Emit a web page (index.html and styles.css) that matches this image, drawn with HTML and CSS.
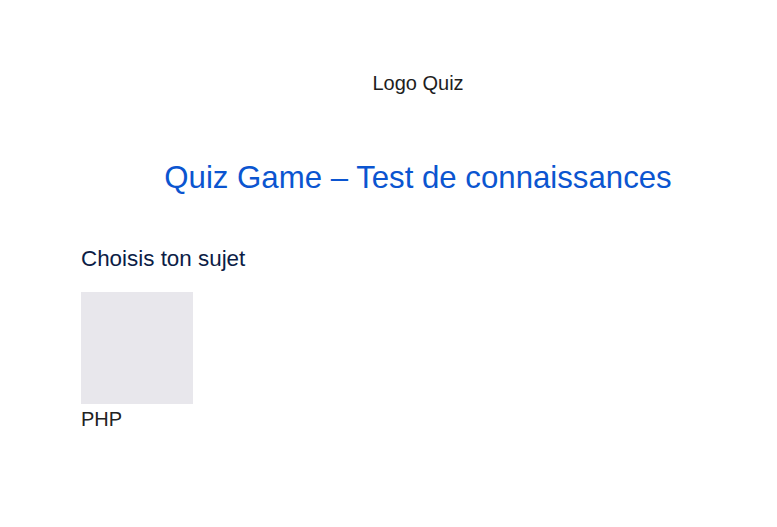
FILE: index.html
```html
<!DOCTYPE html>
<html lang="fr">
<head>
<meta charset="utf-8">
<title>Quiz Game</title>
<link rel="stylesheet" href="styles.css">
</head>
<body>
<div class="page">
  <header class="top">
    <div class="logo">Logo Quiz</div>
  </header>
  <h1 class="title">Quiz Game – Test de connaissances</h1>
  <section class="subjects">
    <h2>Choisis ton sujet</h2>
    <div class="list">
      <a class="subject" href="#">
        <div class="thumb"></div>
        <span class="name">PHP</span>
      </a>
    </div>
  </section>
</div>
</body>
</html>
```

FILE: styles.css
```css
body{
margin:0;
background:#fff;
font-family:"Liberation Sans", Arial, sans-serif;
color:#222;
}
.page{
margin:0 22px 0 81px;
}
.top{
padding-top:72px;
text-align:center;
}
.logo{
font-size:20px;
color:#1e1e1e;
}
.title{
margin:65px 0 0;
text-align:center;
font-size:31.2px;
font-weight:normal;
color:#0b55d0;
}
.subjects h2{
margin:50px 0 0;
font-size:22.4px;
font-weight:normal;
color:#0c1d46;
}
.list{
display:flex;
gap:20px;
margin-top:20px;
}
.subject{
display:flex;
flex-direction:column;
gap:4px;
text-decoration:none;
color:#222;
}
.thumb{
width:112px;
height:112px;
background:#e8e7ec;
}
.name{
font-size:20px;
}
```
